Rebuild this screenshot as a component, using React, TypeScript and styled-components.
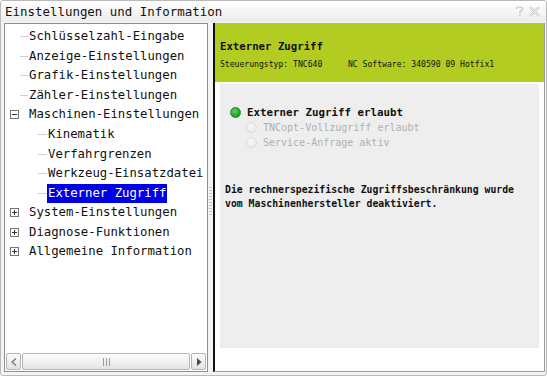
import React from 'react'
import styled, { createGlobalStyle } from 'styled-components'

const GlobalStyle = createGlobalStyle`
  html, body {
    margin: 0;
    padding: 0;
    background: #ffffff;
  }
  body {
    font-family: "DejaVu Sans Mono", "Liberation Mono", monospace;
  }
`

const Window = styled.div`
  width: 547px;
  height: 376px;
  box-sizing: border-box;
  border: 1px solid #b9b9b9;
  border-radius: 3px;
  display: flex;
  flex-direction: column;
  background: #f4f4f4;
  overflow: hidden;
`

const TitleBar = styled.div`
  height: 21px;
  flex: none;
  display: flex;
  align-items: center;
  justify-content: space-between;
  padding: 0 6px 0 4px;
  background: linear-gradient(#ffffff, #ececec);
  font-size: 12.45px;
  color: #111;
`

const TitleIcons = styled.div`
  display: flex;
  gap: 5px;
  align-items: center;
`

const Main = styled.div`
  flex: 1;
  display: flex;
  padding: 1px 1px 3px 3px;
  min-height: 0;
`

const TreePanel = styled.div`
  width: 204px;
  flex: none;
  box-sizing: border-box;
  border: 1px solid #8f8f8f;
  background: #ffffff;
  display: flex;
  flex-direction: column;
`

const TreeList = styled.div`
  flex: 1;
  padding-top: 3px;
`

const Row = styled.div`
  height: 19.55px;
  display: flex;
  align-items: center;
  padding-left: 5px;
  font-size: 12.3px;
  color: #111;
  white-space: nowrap;
`

const Connector = styled.span<{ $level: number }>`
  width: ${(p) => (p.$level === 1 ? 8 : 9)}px;
  height: 1px;
  background: #cfcfcf;
  margin: 0 1px 0 ${(p) => (p.$level === 1 ? 10 : 28)}px;
  flex: none;
`

const Expander = styled.span`
  width: 9px;
  height: 9px;
  box-sizing: border-box;
  border: 1px solid #777;
  margin: 0 10px 0 0;
  flex: none;
  position: relative;
  &::before {
    content: '';
    position: absolute;
    left: 1px;
    right: 1px;
    top: 3px;
    height: 1px;
    background: #333;
  }
`

const PlusExpander = styled(Expander)`
  &::after {
    content: '';
    position: absolute;
    top: 1px;
    bottom: 1px;
    left: 3px;
    width: 1px;
    background: #333;
  }
`

const Label = styled.span<{ $selected?: boolean }>`
  height: 19px;
  line-height: 19px;
  padding: 0 1px;
  margin-left: -1px;
  background: ${(p) => (p.$selected ? '#0000e4' : 'transparent')};
  color: ${(p) => (p.$selected ? '#ffffff' : '#111')};
`

const HScroll = styled.div`
  height: 17px;
  flex: none;
  display: flex;
  padding: 0 1px 1px 1px;
  gap: 1px;
`

const ScrollButton = styled.div`
  width: 15px;
  box-sizing: border-box;
  border: 1px solid #b4b4b4;
  border-radius: 2px;
  background: linear-gradient(#fbfbfb, #e2e2e2);
  display: flex;
  align-items: center;
  justify-content: center;
`

const ScrollThumb = styled.div`
  flex: 1;
  box-sizing: border-box;
  border: 1px solid #b4b4b4;
  border-radius: 2px;
  background: linear-gradient(#fdfdfd, #e4e4e4);
  display: flex;
  align-items: center;
  justify-content: center;
  gap: 2px;
`

const Grip = styled.span`
  width: 1px;
  height: 8px;
  background: #9a9a9a;
`

const Splitter = styled.div`
  width: 5px;
  flex: none;
  display: flex;
  align-items: center;
  justify-content: center;
`

const SplitGrip = styled.div`
  width: 3px;
  height: 28px;
  margin-top: 6px;
  background: repeating-linear-gradient(#c4c4c4 0 1px, transparent 1px 3px);
`

const ContentPanel = styled.div`
  flex: 1;
  display: flex;
  flex-direction: column;
  box-sizing: border-box;
  border-left: 2px solid #111;
  border-right: 1px solid #9c9c9c;
  border-bottom: 1px solid #9c9c9c;
  background: #ffffff;
`

const Header = styled.div`
  height: 59px;
  flex: none;
  background: #b3cc22;
  padding: 16px 0 0 5px;
  box-sizing: border-box;
  color: #111;
`

const HeaderTitle = styled.div`
  font-size: 10.7px;
  font-weight: bold;
  height: 15px;
  line-height: 15px;
`

const HeaderInfo = styled.div`
  font-size: 8.1px;
  margin-top: 5px;
  display: flex;
  white-space: pre;
`

const InfoPart = styled.span`
  width: 128px;
`

const GrayBox = styled.div`
  margin: 2px 5px 0 5px;
  height: 264px;
  background: #eeeeee;
  padding: 21px 0 0 10px;
  box-sizing: border-box;
`

const RadioRow = styled.div<{ $disabled?: boolean }>`
  display: flex;
  align-items: center;
  height: 15px;
  padding-left: ${(p) => (p.$disabled ? 16 : 0)}px;
  font-size: ${(p) => (p.$disabled ? 10 : 10.8)}px;
  font-weight: ${(p) => (p.$disabled ? 'normal' : 'bold')};
  color: ${(p) => (p.$disabled ? '#b0b0b0' : '#111')};
`

const RadioDot = styled.span<{ $on?: boolean }>`
  width: 11px;
  height: 11px;
  border-radius: 50%;
  margin-right: 6px;
  flex: none;
  box-sizing: border-box;
  background: ${(p) =>
    p.$on
      ? 'radial-gradient(circle at 40% 35%, #5ed35e, #1f9a2c 70%)'
      : 'radial-gradient(circle at 40% 35%, #f8f8f8, #e6e6e6)'};
  border: 1px solid ${(p) => (p.$on ? '#2a8a30' : '#dadada')};
`

const Note = styled.div`
  margin: 33px 0 0 -5px;
  font-size: 9.8px;
  font-weight: bold;
  line-height: 13.5px;
  color: #111;
`

const tree = [
  { text: 'Schlüsselzahl-Eingabe', level: 1, kind: 'leaf' },
  { text: 'Anzeige-Einstellungen', level: 1, kind: 'leaf' },
  { text: 'Grafik-Einstellungen', level: 1, kind: 'leaf' },
  { text: 'Zähler-Einstellungen', level: 1, kind: 'leaf' },
  { text: 'Maschinen-Einstellungen', level: 1, kind: 'open' },
  { text: 'Kinematik', level: 2, kind: 'leaf' },
  { text: 'Verfahrgrenzen', level: 2, kind: 'leaf' },
  { text: 'Werkzeug-Einsatzdatei', level: 2, kind: 'leaf' },
  { text: 'Externer Zugriff', level: 2, kind: 'leaf', selected: true },
  { text: 'System-Einstellungen', level: 1, kind: 'closed' },
  { text: 'Diagnose-Funktionen', level: 1, kind: 'closed' },
  { text: 'Allgemeine Information', level: 1, kind: 'closed' },
]

function TitleGlyphs() {
  return (
    <TitleIcons>
      <svg width="9" height="11" viewBox="0 0 9 11">
        <path d="M1.5 3 Q1.5 1 4.5 1 Q7.5 1 7.5 3.2 Q7.5 4.8 5 5.6 L5 7.5" fill="none" stroke="#c4c4c4" strokeWidth="1.2" />
        <rect x="4.3" y="8.6" width="1.4" height="1.4" fill="#c4c4c4" />
      </svg>
      <svg width="11" height="11" viewBox="0 0 11 11">
        <path d="M1 1 L10 10 M10 1 L1 10" stroke="#cccccc" strokeWidth="2.4" />
        <path d="M1 1 L10 10 M10 1 L1 10" stroke="#f6f6f6" strokeWidth="0.8" />
      </svg>
    </TitleIcons>
  )
}

export default function App() {
  return (
    <>
      <GlobalStyle />
      <Window>
        <TitleBar>
          <span>Einstellungen und Information</span>
          <TitleGlyphs />
        </TitleBar>
        <Main>
          <TreePanel>
            <TreeList>
              {tree.map((item) => (
                <Row key={item.text}>
                  {item.kind === 'leaf' && <Connector $level={item.level} />}
                  {item.kind === 'open' && <Expander />}
                  {item.kind === 'closed' && <PlusExpander />}
                  <Label $selected={item.selected}>{item.text}</Label>
                </Row>
              ))}
            </TreeList>
            <HScroll>
              <ScrollButton>
                <svg width="6" height="8" viewBox="0 0 6 8">
                  <path d="M5 0.5 L1 4 L5 7.5" fill="none" stroke="#6a7a90" strokeWidth="1.3" />
                </svg>
              </ScrollButton>
              <ScrollThumb>
                <Grip />
                <Grip />
                <Grip />
              </ScrollThumb>
              <ScrollButton>
                <svg width="6" height="8" viewBox="0 0 6 8">
                  <path d="M1 0 L5.5 4 L1 8 Z" fill="#3a4c68" />
                </svg>
              </ScrollButton>
            </HScroll>
          </TreePanel>
          <Splitter>
            <SplitGrip />
          </Splitter>
          <ContentPanel>
            <Header>
              <HeaderTitle>Externer Zugriff</HeaderTitle>
              <HeaderInfo>
                <InfoPart>Steuerungstyp: TNC640</InfoPart>
                <span>NC Software: 340590 09 Hotfix1</span>
              </HeaderInfo>
            </Header>
            <GrayBox>
              <RadioRow>
                <RadioDot $on />
                Externer Zugriff erlaubt
              </RadioRow>
              <RadioRow $disabled>
                <RadioDot />
                TNCopt-Vollzugriff erlaubt
              </RadioRow>
              <RadioRow $disabled>
                <RadioDot />
                Service-Anfrage aktiv
              </RadioRow>
              <Note>
                Die rechnerspezifische Zugriffsbeschränkung wurde
                <br />
                vom Maschinenhersteller deaktiviert.
              </Note>
            </GrayBox>
          </ContentPanel>
        </Main>
      </Window>
    </>
  )
}
